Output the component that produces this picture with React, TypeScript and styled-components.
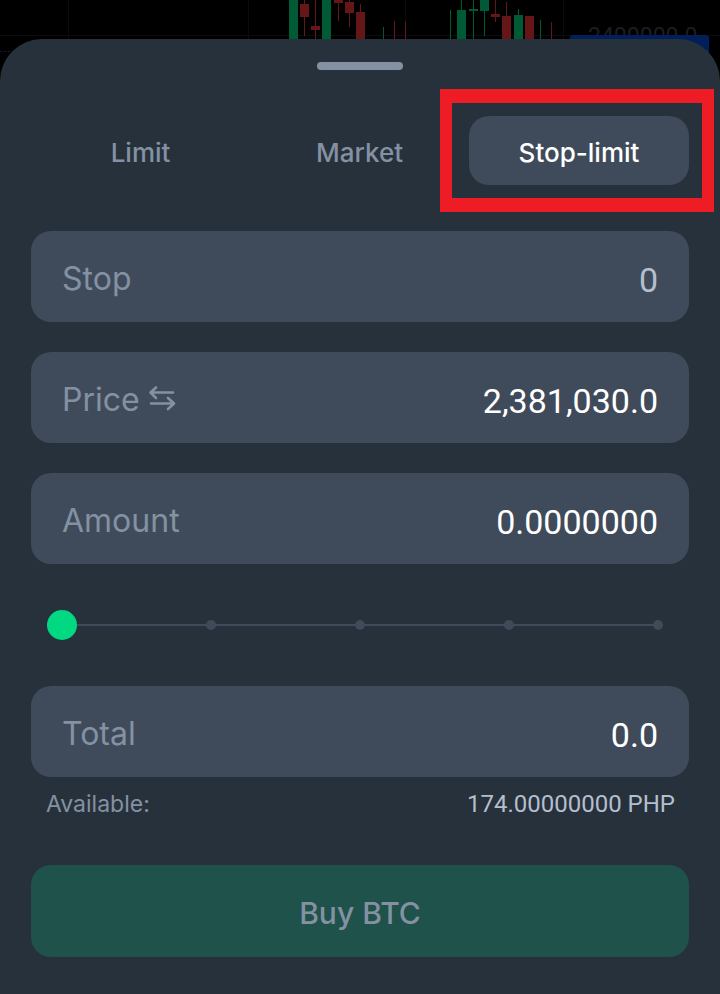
import { useState } from "react";
import type { ReactNode } from "react";
import styled, { createGlobalStyle } from "styled-components";

const color = {
  sheet: "#27313c",
  field: "#3f4b5a",
  muted: "#8491a3",
  soft: "#b4bfce",
  strong: "#ffffff",
  accent: "#00d982",
  buy: "#1f524a",
  callout: "#ee1c24",
};

const GlobalStyle = createGlobalStyle`
  *, *::before, *::after { box-sizing: border-box; }
  body { margin: 0; background: #000; }
  button, input { font: inherit; }
`;

const Page = styled.div`
  position: relative;
  display: flex;
  flex-direction: column;
  min-height: 100vh;
  padding-top: 39px;
  overflow: hidden;
  font-family: Inter, "Liberation Sans", sans-serif;
`;

const Backdrop = styled.svg`
  position: absolute;
  top: 0;
  right: 0;
  width: 720px;
  height: 90px;
`;

const Sheet = styled.form`
  position: relative;
  flex: 1;
  display: flex;
  flex-direction: column;
  padding: 23px 31px 37px;
  border-radius: 42px 42px 0 0;
  background: ${color.sheet};
`;

const Handle = styled.div`
  align-self: center;
  width: 86px;
  height: 8px;
  border-radius: 4px;
  background: ${color.muted};
`;

const Tabs = styled.div`
  display: grid;
  grid-template-columns: 1fr 1fr 220px;
  margin: 46px 0;
`;

const TabSlot = styled.div`
  position: relative;
  display: grid;
`;

const Tab = styled.button<{ $active: boolean }>`
  height: 69px;
  padding: 4px 0 0;
  border: 0;
  border-radius: 20px;
  background: ${(p) => (p.$active ? color.field : "transparent")};
  color: ${(p) => (p.$active ? color.strong : color.muted)};
  font-size: 26px;
  font-weight: 500;
  line-height: 32px;
  cursor: pointer;
`;

const Callout = styled.div`
  position: absolute;
  inset: -27px -25px -27px -29px;
  border: solid ${color.callout};
  border-width: 14px 12px;
  pointer-events: none;
`;

const Fields = styled.div`
  display: grid;
  gap: 30px;
`;

const FieldBox = styled.label`
  display: flex;
  align-items: center;
  height: 91px;
  padding: 5px 31px 0;
  border-radius: 20px;
  background: ${color.field};
`;

const FieldName = styled.span`
  display: flex;
  align-items: center;
  gap: 8px;
  color: ${color.muted};
  font-size: 32px;
  line-height: 40px;
`;

const FieldInput = styled.input<{ $dim?: boolean }>`
  flex: 1;
  min-width: 0;
  height: 42px;
  padding: 2px 0 0;
  border: 0;
  outline: 0;
  background: transparent;
  color: ${(p) => (p.$dim ? color.soft : color.strong)};
  font-family: Roboto, "Liberation Sans", sans-serif;
  font-size: 34px;
  line-height: 40px;
  text-align: right;
`;

const SwapIcon = styled.svg`
  width: 28px;
  height: 28px;
  overflow: visible;
  fill: none;
  stroke: currentColor;
  stroke-width: 2.6;
  stroke-linecap: round;
  stroke-linejoin: round;
`;

const SliderBox = styled.div`
  display: grid;
  height: 30px;
  margin: 46px 16px;
`;

const Marks = styled.div`
  grid-area: 1 / 1;
  display: flex;
  align-items: center;
  justify-content: space-between;
  padding: 0 10px;
  background: linear-gradient(${color.field}, ${color.field}) center / calc(100% - 30px) 2px no-repeat;
`;

const Mark = styled.span`
  width: 10px;
  height: 10px;
  border-radius: 50%;
  background: ${color.field};
`;

const Range = styled.input`
  grid-area: 1 / 1;
  z-index: 1;
  width: 100%;
  height: 30px;
  margin: 0;
  appearance: none;
  background: transparent;
  cursor: pointer;

  &::-webkit-slider-thumb {
    appearance: none;
    width: 30px;
    height: 30px;
    border: 0;
    border-radius: 50%;
    background: ${color.accent};
  }
`;

const Balance = styled.div`
  display: flex;
  justify-content: space-between;
  margin: 11px 14px 45px 15px;
  color: ${color.muted};
  font-size: 23px;
  line-height: 32px;
`;

const BalanceValue = styled.span`
  color: ${color.soft};
  font-family: Roboto, "Liberation Sans", sans-serif;
  font-size: 24px;
`;

const BuyButton = styled.button`
  height: 92px;
  padding: 4px 0 0;
  border: 0;
  border-radius: 20px;
  background: ${color.buy};
  color: ${color.muted};
  font-size: 30px;
  font-weight: 500;
  line-height: 40px;
  cursor: pointer;
`;

const UP = "#005a36";
const DOWN = "#651717";

type Candle = { x: number; up: boolean; wick: [number, number]; body?: [number, number] };

const candles: Candle[] = [
  { x: 293, up: true, wick: [0, 40], body: [0, 40] },
  { x: 304, up: false, wick: [0, 36], body: [4, 17] },
  { x: 315, up: false, wick: [0, 40], body: [26, 30] },
  { x: 326, up: true, wick: [0, 40], body: [0, 40] },
  { x: 338, up: false, wick: [0, 21], body: [0, 3] },
  { x: 349, up: false, wick: [0, 27], body: [2, 13] },
  { x: 360, up: false, wick: [4, 40], body: [12, 40] },
  { x: 383, up: true, wick: [27, 40] },
  { x: 394, up: false, wick: [21, 40] },
  { x: 405, up: false, wick: [22, 40] },
  { x: 450, up: true, wick: [10, 40] },
  { x: 461, up: true, wick: [0, 40], body: [10, 40] },
  { x: 473, up: true, wick: [0, 40], body: [9, 11] },
  { x: 484, up: true, wick: [0, 36], body: [0, 11] },
  { x: 495, up: false, wick: [0, 22], body: [14, 17] },
  { x: 506, up: false, wick: [2, 40], body: [16, 40] },
  { x: 518, up: true, wick: [9, 40], body: [15, 40] },
  { x: 529, up: false, wick: [16, 40], body: [16, 40] },
  { x: 540, up: true, wick: [20, 40] },
  { x: 551, up: false, wick: [22, 40] },
];

function PriceChart() {
  return (
    <Backdrop viewBox="0 0 720 90" aria-hidden="true">
      <path d="M0 35.5H720M68.5 0V40M248.5 0V40M405.5 0V40M563.5 0V40" stroke="#0b0c10" />
      {candles.map((c) => (
        <g key={c.x} fill={c.up ? UP : DOWN}>
          <rect x={c.x} y={c.wick[0]} width="1" height={c.wick[1] - c.wick[0]} />
          {c.body && <rect x={c.x - 4} y={c.body[0]} width="9" height={c.body[1] - c.body[0]} />}
        </g>
      ))}
      <path d="M0 51.5H20" stroke="#11183c" strokeDasharray="2 2" />
      <text x="588" y="44" fill="#1b1d22" fontFamily="Roboto, sans-serif" fontSize="23">
        2400000.0
      </text>
      <rect x="570" y="35" width="139" height="40" rx="3" fill="#01205a" />
    </Backdrop>
  );
}

type FieldProps = { id: string; name: string; value: string; children?: ReactNode };

function Field({ id, name, value, children }: FieldProps) {
  const [text, setText] = useState(value);
  return (
    <FieldBox htmlFor={id}>
      <FieldName>
        {name}
        {children}
      </FieldName>
      <FieldInput
        id={id}
        inputMode="decimal"
        value={text}
        $dim={text === "0"}
        onChange={(e) => setText(e.target.value)}
      />
    </FieldBox>
  );
}

const orderTypes = ["Limit", "Market", "Stop-limit"];

export default function App() {
  const [type, setType] = useState("Stop-limit");
  const [share, setShare] = useState(0);

  return (
    <>
      <GlobalStyle />
      <Page>
        <PriceChart />
        <Sheet onSubmit={(e) => e.preventDefault()}>
          <Handle />
          <Tabs role="tablist" aria-label="Order type">
            {orderTypes.map((t) => (
              <TabSlot key={t} role="presentation">
                <Tab type="button" role="tab" aria-selected={t === type} $active={t === type} onClick={() => setType(t)}>
                  {t}
                </Tab>
                {t === "Stop-limit" && <Callout />}
              </TabSlot>
            ))}
          </Tabs>
          <Fields>
            <Field id="stop" name="Stop" value="0" />
            <Field id="price" name="Price" value="2,381,030.0">
              <SwapIcon viewBox="0 0 28 28" aria-hidden="true">
                <path d="M8 1.5L2.5 6.5L8 12M2.5 6.5H25M3 17.5H26M20 12L26 17.5L20 23" />
              </SwapIcon>
            </Field>
            <Field id="amount" name="Amount" value="0.0000000" />
          </Fields>
          <SliderBox>
            <Marks>
              {[0, 25, 50, 75, 100].map((m) => (
                <Mark key={m} />
              ))}
            </Marks>
            <Range
              type="range"
              min={0}
              max={100}
              step={25}
              value={share}
              aria-label="Share of balance"
              onChange={(e) => setShare(Number(e.target.value))}
            />
          </SliderBox>
          <Field id="total" name="Total" value="0.0" />
          <Balance>
            <span>Available:</span>
            <BalanceValue>174.00000000 PHP</BalanceValue>
          </Balance>
          <BuyButton type="submit">Buy BTC</BuyButton>
        </Sheet>
      </Page>
    </>
  );
}
